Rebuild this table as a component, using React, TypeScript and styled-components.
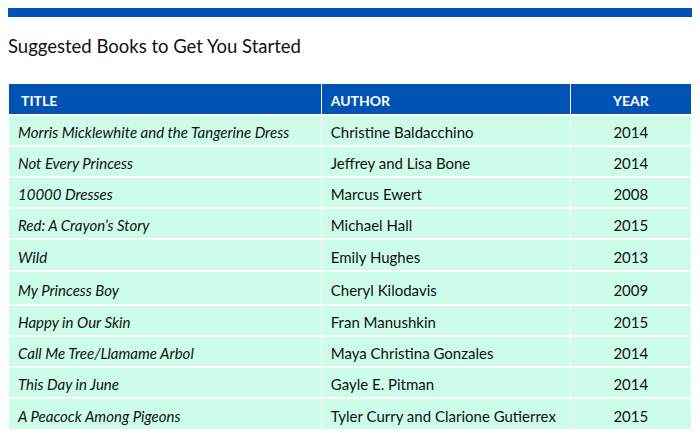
import React from "react";
import styled, { createGlobalStyle } from "styled-components";

const Global = createGlobalStyle`
  body {
    margin: 8px;
    background: #ffffff;
    font-family: Lato, "Noto Sans", sans-serif;
    color: #111111;
  }
`;

const TopBar = styled.div`
  height: 9px;
  background: #0053b5;
`;

const Heading = styled.h2`
  margin: 0;
  padding: 18px 0 0 0;
  height: 67px;
  box-sizing: border-box;
  font-size: 18.5px;
  font-weight: 400;
  color: #111111;
`;

const Table = styled.table`
  width: 100%;
  border-collapse: collapse;
  font-size: 15px;
`;

const HeadCell = styled.th<{ $align?: string; $pad?: number }>`
  background: #0053b5;
  color: #ffffff;
  font-weight: 700;
  font-size: 14px;
  text-transform: uppercase;
  text-align: ${(p) => p.$align || "left"};
  padding: 3px 0 0 ${(p) => p.$pad ?? 9}px;
  height: 31px;
  box-sizing: border-box;
  border: 1px solid #ffffff;
  border-top: none;
`;

const Row = styled.tr<{ $h: number }>`
  height: ${(p) => p.$h}px;
`;

const Cell = styled.td<{ $italic?: boolean; $align?: string; $pad?: number }>`
  background: #cdfce9;
  font-style: ${(p) => (p.$italic ? "italic" : "normal")};
  text-align: ${(p) => p.$align || "left"};
  padding: 3px 0 0 ${(p) => p.$pad ?? 9}px;
  border: 1px solid #ffffff;
  border-width: 2px 1px 0 1px;
  white-space: nowrap;
`;

const books: [string, string, string, number][] = [
  ["Morris Micklewhite and the Tangerine Dress", "Christine Baldacchino", "2014", 31],
  ["Not Every Princess", "Jeffrey and Lisa Bone", "2014", 31],
  ["10000 Dresses", "Marcus Ewert", "2008", 31],
  ["Red: A Crayon\u2019s Story", "Michael Hall", "2015", 31],
  ["Wild", "Emily Hughes", "2013", 32],
  ["My Princess Boy", "Cheryl Kilodavis", "2009", 34],
  ["Happy in Our Skin", "Fran Manushkin", "2015", 31],
  ["Call Me Tree/Llamame Arbol", "Maya Christina Gonzales", "2014", 31],
  ["This Day in June", "Gayle E. Pitman", "2014", 31],
  ["A Peacock Among Pigeons", "Tyler Curry and Clarione Gutierrex", "2015", 31],
];

export default function App() {
  return (
    <>
      <Global />
      <TopBar />
      <Heading>Suggested Books to Get You Started</Heading>
      <Table>
        <colgroup>
          <col style={{ width: 313 }} />
          <col style={{ width: 249 }} />
          <col style={{ width: 122 }} />
        </colgroup>
        <thead>
          <tr>
            <HeadCell $pad={12}>Title</HeadCell>
            <HeadCell>Author</HeadCell>
            <HeadCell $align="center" $pad={0}>Year</HeadCell>
          </tr>
        </thead>
        <tbody>
          {books.map(([t, a, y, h]) => (
            <Row key={t} $h={h}>
              <Cell $italic>{t}</Cell>
              <Cell>{a}</Cell>
              <Cell $align="center" $pad={0}>{y}</Cell>
            </Row>
          ))}
        </tbody>
      </Table>
    </>
  );
}
